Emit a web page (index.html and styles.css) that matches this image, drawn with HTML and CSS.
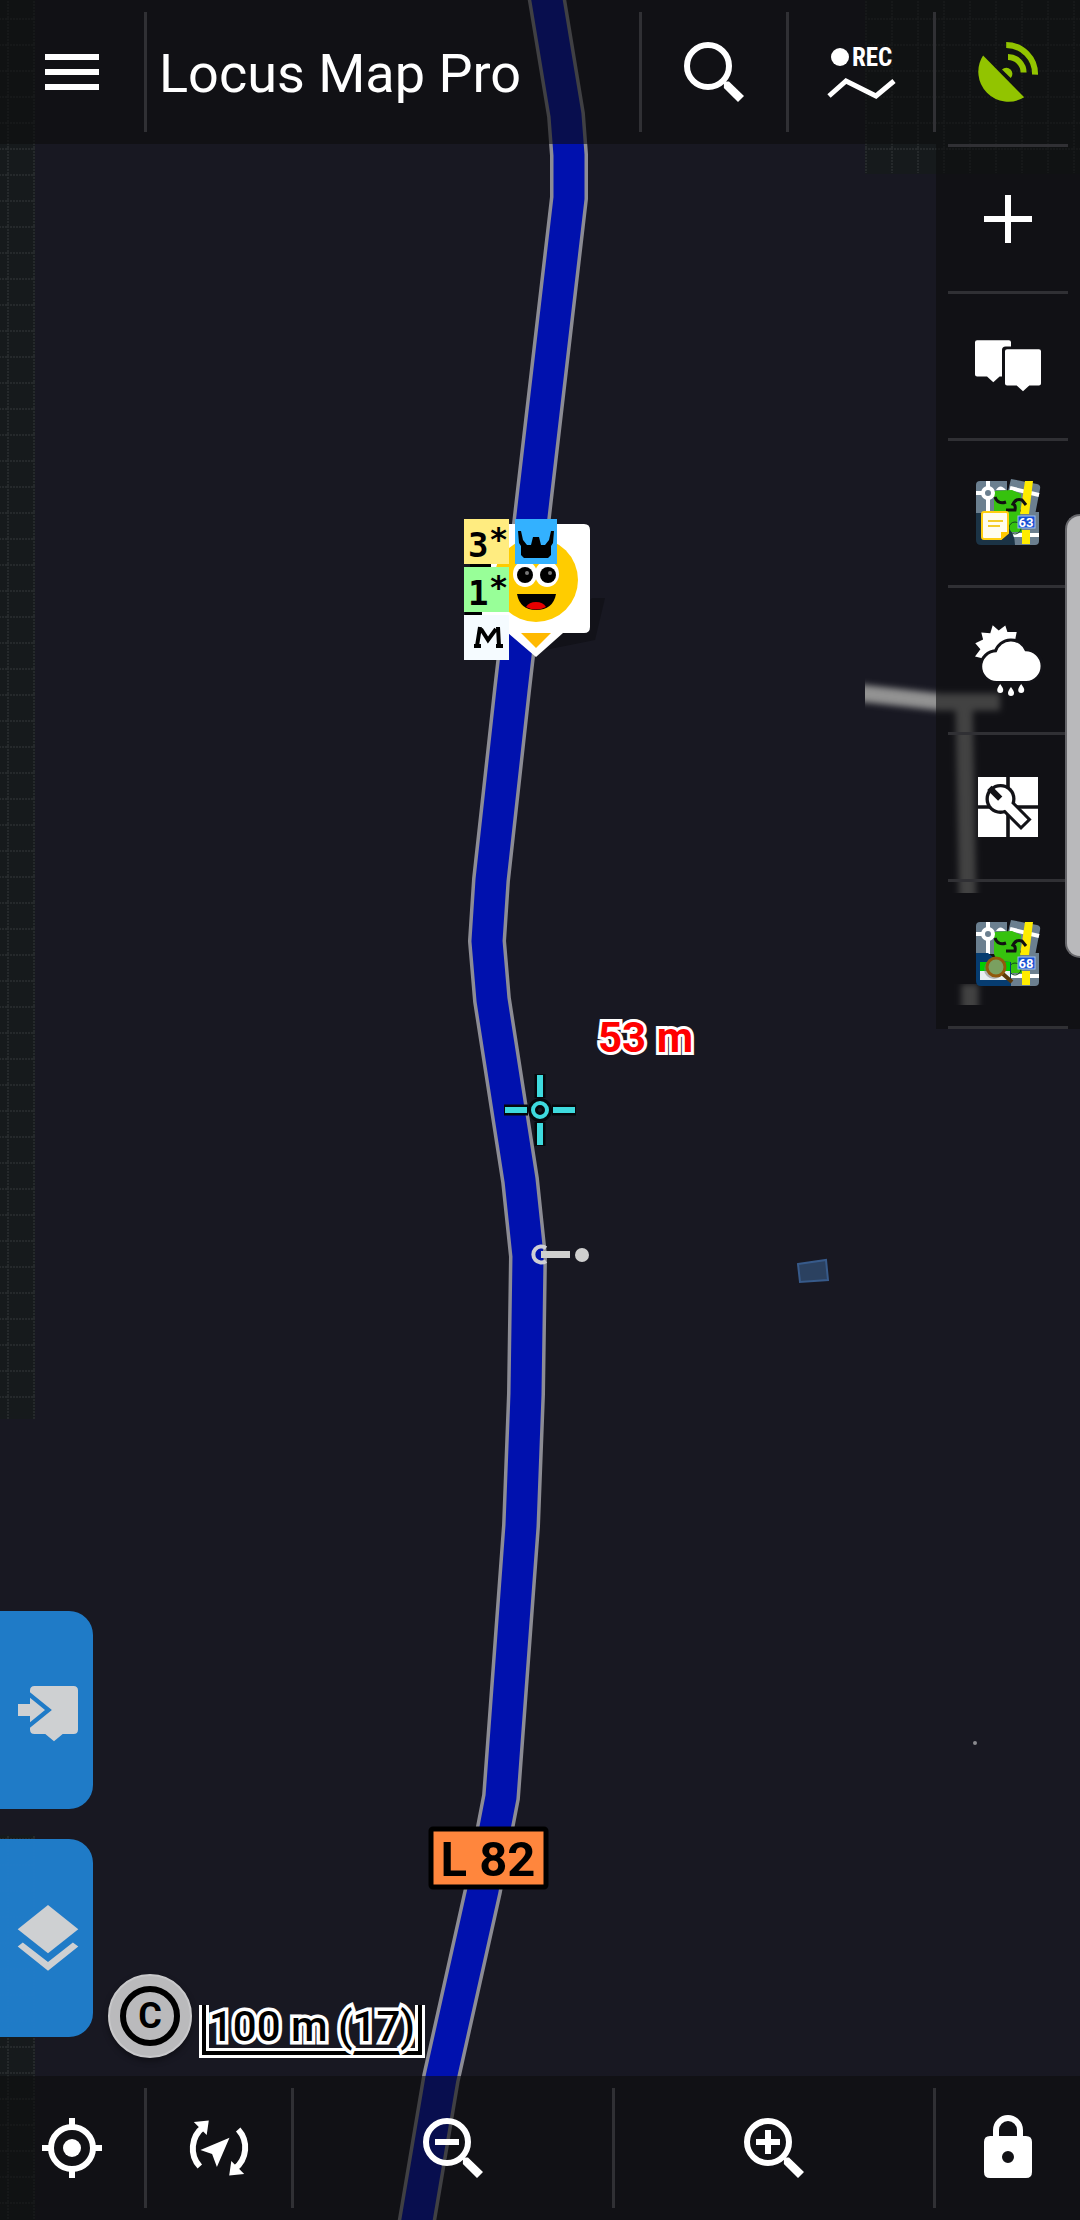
FILE: index.html
```html
<!DOCTYPE html>
<html lang="en">

<head>
    <meta charset="UTF-8">
    <meta name="viewport" content="width=device-width, initial-scale=1.0">
    <title>Locus Map Pro</title>
    <link rel="stylesheet" href="styles.css">
</head>

<body>
    <div class="app">
        <!-- map canvas -->
        <svg class="map" viewBox="0 0 1080 2220" preserveAspectRatio="xMidYMid slice">
            <defs>
                <pattern id="grid" x="7" y="18" width="26" height="26" patternUnits="userSpaceOnUse">
                    <path d="M0 1H26M1 0V26" class="grid-line" />
                </pattern>
                <filter id="soft" x="-20%" y="-50%" width="140%" height="200%">
                    <feGaussianBlur stdDeviation="3" />
                </filter>
                <clipPath id="tileClip">
                    <path d="M865 660H1080V893H865ZM950 984H1000V1005H950Z" />
                </clipPath>
            </defs>

            <rect width="1080" height="2220" fill="#181822" />
            <path class="forest" d="M0 0H35V1419H0ZM865 0H1080V174H865ZM0 1835H35V2220H0Z" />
            <path fill="url(#grid)" d="M0 0H35V1419H0ZM865 0H1080V173H865ZM0 1835H35V2220H0Z" />

            <!-- side roads -->
            <g clip-path="url(#tileClip)">
                <g class="side-road" filter="url(#soft)">
                    <path d="M850 692L940 702L1000 702" />
                    <path d="M964 702L968 920" />
                    <path d="M970 984V1020" />
                </g>
            </g>

            <!-- main road -->
            <path class="road-edge" d="M545 -12L547 0L566 115L569 155L569 198L555 318L535 490L512 690L491 880L487 941L492 1000L520 1180L528 1256L526 1394L521 1526L501 1797L483 1890L441 2078L415 2232" />
            <path class="road" d="M545 -12L547 0L566 115L569 155L569 198L555 318L535 490L512 690L491 880L487 941L492 1000L520 1180L528 1256L526 1394L521 1526L501 1797L483 1890L441 2078L415 2232" />

            <!-- building, barrier, tree -->
            <path d="M798 1264L826 1260L828 1280L800 1282Z" fill="#2b4160" stroke="#375a8a" stroke-width="2" />
            <path d="M546 1248A8 8 0 1 0 546 1261" fill="none" stroke="#cfcfd4" stroke-width="4" />
            <rect x="541" y="1251" width="29" height="7" fill="#cfcfcf" />
            <circle cx="582" cy="1255" r="7" fill="#cfcfcf" />
            <circle cx="975" cy="1743" r="2" fill="#8a8a8e" />

            <!-- geocache marker -->
            <path d="M592 598H605L595 640L545 650Z" fill="#0f0f15" opacity=".7" />
            <path d="M487 524H584Q590 524 590 530V627Q590 633 584 633H563L536 657L508 633H487Q481 633 481 627V530Q481 524 487 524Z" fill="#fff" />
            <circle cx="536" cy="580" r="42" fill="#fc0" />
            <ellipse cx="525" cy="574" rx="12" ry="13" fill="#fff" />
            <ellipse cx="547" cy="574" rx="12" ry="13" fill="#fff" />
            <circle cx="525" cy="575" r="8" />
            <circle cx="548" cy="575" r="8" />
            <circle cx="527" cy="573" r="2" fill="#777" />
            <circle cx="550" cy="573" r="2" fill="#777" />
            <path d="M517 594H556Q553 610 536 610Q520 610 517 594Z" />
            <path d="M526 607Q529 602 536 602Q543 602 546 607Q536 612 526 607Z" fill="#e60000" />
            <path d="M521 633H551L536 648Z" fill="#ffb900" />
            <path d="M470 564H491V567H470ZM465 612H482V615H465Z" />
            <rect x="464" y="519" width="45" height="45" fill="#ffec80" />
            <rect x="464" y="567" width="45" height="45" fill="#98ff98" />
            <rect x="464" y="615" width="45" height="45" fill="#f5fbff" />
            <rect x="515" y="519" width="42" height="45" fill="#33b1ff" />
            <path d="M518 531H521L523 540L527 545H531L533 537H539L541 545H545L549 540L551 531H554L553 543L551 546V555L548 558H524L521 555V546L519 543Z" />
            <g class="badge-text">
                <text x="468" y="557">3</text>
                <text x="489" y="550" class="star">*</text>
                <text x="468" y="605">1</text>
                <text x="489" y="598" class="star">*</text>
            </g>
            <path d="M480 627L477 646M474 646H481M481 629L488 640L496 629M498 627L499 646M496 646H503" fill="none" stroke="#000" stroke-width="4" />

            <!-- distance and map centre -->
            <text x="598" y="1052" class="distance">53 m</text>
            <g fill="none">
                <path d="M504 1110H528M552 1110H576M540 1074V1098M540 1122V1146" stroke="#05080c" stroke-width="11" />
                <circle cx="540" cy="1110" r="7" stroke="#05080c" stroke-width="10" />
                <path d="M505 1110H527M553 1110H575M540 1075V1097M540 1123V1145" stroke="#3edade" stroke-width="6" />
                <circle cx="540" cy="1110" r="7" stroke="#3edade" stroke-width="4" />
            </g>

            <!-- road number -->
            <rect x="431" y="1829" width="115" height="58" rx="2" fill="#ff863d" stroke="#000" stroke-width="5" />
            <text x="488" y="1876" class="road-number">L 82</text>
        </svg>

        <header class="top-bar">
            <button class="tool" aria-label="Menu">
                <svg class="icon" viewBox="0 0 24 24"><path d="M3 6H21V8H3ZM3 11H21V13H3ZM3 16H21V18H3Z" /></svg>
            </button>
            <h1 class="title">Locus Map Pro</h1>
            <button class="tool" aria-label="Search">
                <svg class="icon" viewBox="0 0 24 24">
                    <circle cx="10" cy="10" r="7" class="line" />
                    <path d="M15.3 15.2H17L22 20L20 22L15.3 17.3Z" />
                </svg>
            </button>
            <button class="tool" aria-label="Track recording">
                <svg class="icon" viewBox="0 0 72 72">
                    <circle cx="15" cy="21" r="9" />
                    <text x="27" y="30" class="rec">REC</text>
                    <path d="M4 60L21 45L51 60L69 45" class="line line-px" />
                </svg>
            </button>
            <button class="tool gps" aria-label="GPS">
                <svg class="icon" viewBox="0 0 24 24">
                    <path d="M3.7 6.5A10 10 0 0 0 17.4 20.4Z" />
                    <path d="M10 11.2A1.9 1.9 0 0 1 12.9 14Z" />
                    <path d="M11.4 3A9.6 9.6 0 0 1 21 12.9M12 7A5.2 5.2 0 0 1 17.2 12.2" class="line" />
                </svg>
            </button>
        </header>

        <main class="overlay">
            <nav class="quick">
                <button class="quick-btn" aria-label="Points panel">
                    <svg class="icon" viewBox="0 0 24 24">
                        <path d="M7.5 4H20.5Q22 4 22 5.5V18.5Q22 20 20.5 20H16.9L14 22.4L11.1 20H7.5Q6 20 6 18.5V17.9L13.3 12L6 6.1V5.5Q6 4 7.5 4Z" />
                        <path d="M2 10H6V7.9L11 12L6 16.1V14H2Z" />
                    </svg>
                </button>
                <button class="quick-btn" aria-label="Map layers">
                    <svg class="icon" viewBox="0 0 24 24">
                        <path d="M12 1L22.1 9.1L12 17.1L1.9 9.1Z" />
                        <path d="M1.9 14.8L3.6 13.5L12 20L20.3 13.5L22.1 14.8L12 22.9Z" />
                    </svg>
                </button>
            </nav>

            <div class="map-info">
                <button class="copyright" aria-label="Map copyright"><span class="copyright-mark">C</span></button>
                <div class="scale"><div class="scale-label">100 m (17)</div></div>
            </div>

            <nav class="side-bar">
                <button class="side-btn" aria-label="Add">
                    <svg class="icon" viewBox="0 0 24 24"><path d="M11 4H13V11H20V13H13V20H11V13H4V11H11Z" /></svg>
                </button>
                <button class="side-btn" aria-label="Points">
                    <svg class="icon" viewBox="0 0 24 24">
                        <path d="M1.7 3.4H12.3Q13 3.4 13 4.1V5.5H11.2Q10 5.5 10 6.7V15.5H9.2L7.1 17.4L5 15.5H1.7Q1 15.5 1 14.8V4.1Q1 3.4 1.7 3.4Z" />
                        <path d="M11.7 6.4H22.3Q23 6.4 23 7.1V17.8Q23 18.5 22.3 18.5H19.1L17 20.4L14.9 18.5H11.7Q11 18.5 11 17.8V7.1Q11 6.4 11.7 6.4Z" />
                    </svg>
                </button>
                <button class="side-btn" aria-label="Map note">
                    <svg class="icon" viewBox="0 0 72 72">
                        <g id="puzzle">
                            <path d="M8 4H35V36H4V8Q4 4 8 4Z" fill="#6b7f8f" />
                            <path d="M38 35H67V64Q67 68 63 68H38Z" fill="#6b7f8f" />
                            <path d="M16 4V36M4 16H22M38 58H67" stroke="#fff" stroke-width="4" fill="none" />
                            <path d="M39 2L65 7Q69 8 68 12L63 38L50 35L36 14Z" fill="#6b7f8f" />
                            <path d="M38 11L67 18" stroke="#fff" stroke-width="4" fill="none" />
                            <path d="M53 4H61L57 37H48ZM50 53H58V67H50Z" fill="#ffec00" />
                            <path d="M22 14L40 13L49 17L48 35L50 55H30L22 36Z" fill="#36c20e" />
                            <circle cx="16" cy="16" r="5" fill="#6b7f8f" stroke="#fff" stroke-width="4" />
                            <path d="M24 13Q28 6 34 13Z" fill="#fff" />
                            <path d="M23 20Q26 28 34 25M34 33H43Q44 28 41 27Q44 21 50 23L54 28" stroke="#111" stroke-width="3" fill="none" />
                            <circle cx="43" cy="51" r="6" fill="none" stroke="#142" stroke-width="1" />
                            <rect x="46" y="39" width="17" height="12" fill="#1750d4" stroke="#9cc0f5" stroke-width="1" />
                        </g>
                        <path d="M4 36H34V50Q43 55 43 68H9Q4 68 4 63Z" fill="#1b3345" />
                        <path d="M12 35H34Q36 35 36 37V56L29 62H12Q10 62 10 60V37Q10 35 12 35Z" fill="#fffdf0" stroke="#ffcf10" stroke-width="2" />
                        <path d="M29 63V55H37Z" fill="#ffc800" />
                        <path d="M16 44H31M16 49H28" stroke="#f4cd2a" stroke-width="2" />
                        <text x="54" y="50" class="badge-number">63</text>
                    </svg>
                </button>
                <button class="side-btn" aria-label="Weather">
                    <svg class="icon" viewBox="0 0 24 24">
                        <path d="M6.9 .4L8.9 2.2L11.1 .5L11.8 2.7L14.9 2.7L14.4 5.2L8 11.5L3.4 11.4L1 10.8L2.8 8.4L1.1 6.4L3.7 5.2L3.1 2.8L6.1 3.1Z" />
                        <path class="cloud-gap" d="M8.2 19A4.8 4.8 0 0 1 8.2 9.4A5 5 0 0 1 17.7 9.1A4.9 4.9 0 0 1 18.1 19Z" />
                        <path d="M8.2 19A4.8 4.8 0 0 1 8.2 9.4A5 5 0 0 1 17.7 9.1A4.9 4.9 0 0 1 18.1 19Z" />
                        <path d="M9.4 20Q10.5 21.5 10.4 22A1 1 0 0 1 8.4 22Q8.4 21.3 9.4 20ZM13 21Q14.1 22.5 14 23A1 1 0 0 1 12 23Q12 22.3 13 21ZM16.4 20Q17.5 21.5 17.4 22A1 1 0 0 1 15.4 22Q15.4 21.3 16.4 20Z" />
                    </svg>
                </button>
                <button class="side-btn" aria-label="Map tools">
                    <svg class="icon" viewBox="0 0 24 24">
                        <path d="M2 2H11.4V11.4H2ZM12.6 2H22V11.4H12.6ZM2 12.6H11.4V22H2ZM12.6 12.6H22V22H12.6Z" />
                        <path d="M9.5 9.3L18.1 17.9" class="wrench-edge" />
                        <circle cx="9.5" cy="9.3" r="5" fill="#121217" />
                        <circle cx="9.5" cy="9.3" r="3.9" />
                        <path d="M9.5 9.3L17.4 17.2" class="wrench" />
                        <path d="M5.8 5.6L9.4 9.2" class="wrench-slot" />
                    </svg>
                </button>
                <button class="side-btn" aria-label="Map search">
                    <svg class="icon" viewBox="0 0 72 72">
                        <use href="#puzzle" />
                        <path d="M4 35H16Q24 44 39 44V68H9Q4 68 4 63Z" fill="#063c70" />
                        <path d="M8 44H38V53H8Z" fill="#0c0" />
                        <path d="M8 53H38V62H8Z" fill="#e8eef0" />
                        <circle cx="22" cy="51" r="10" fill="#777" opacity=".5" />
                        <path d="M31 56L40 64" stroke="#5c3a0a" stroke-width="4" />
                        <circle cx="24" cy="49" r="9" fill="#7aa060" stroke="#91590c" stroke-width="3" />
                        <text x="54" y="50" class="badge-number">68</text>
                    </svg>
                </button>
            </nav>
        </main>

        <footer class="bottom-bar">
            <button class="tool" aria-label="Centre on GPS">
                <svg class="icon" viewBox="0 0 24 24">
                    <circle cx="12" cy="12" r="7" class="line" />
                    <circle cx="12" cy="12" r="3" />
                    <path d="M11 2H13V5H11ZM11 19H13V22H11ZM2 11H5V13H2ZM19 11H22V13H19Z" />
                </svg>
            </button>
            <button class="tool" aria-label="Rotate map">
                <svg class="icon" viewBox="0 0 24 24">
                    <path d="M5.6 18.2A9 9 0 0 1 6.8 5M18.4 5.8A9 9 0 0 1 17.2 19" class="line" />
                    <path d="M8.6 2.8L3.6 3.3L7.9 7.7ZM15.4 21.2L20.4 20.7L16.1 16.3Z" />
                    <path d="M15.5 8.6L5.8 12.7L9.7 14L11.3 18.3Z" />
                </svg>
            </button>
            <button class="tool wide" aria-label="Zoom out">
                <svg class="icon" viewBox="0 0 24 24">
                    <circle cx="10" cy="10" r="7" class="line" />
                    <path d="M15.3 15.2H17L22 20L20 22L15.3 17.3ZM6 9H14V11H6Z" />
                </svg>
            </button>
            <button class="tool wide" aria-label="Zoom in">
                <svg class="icon" viewBox="0 0 24 24">
                    <circle cx="10" cy="10" r="7" class="line" />
                    <path d="M15.3 15.2H17L22 20L20 22L15.3 17.3ZM9 6H11V9H14V11H11V14H9V11H6V9H9Z" />
                </svg>
            </button>
            <button class="tool" aria-label="Lock screen">
                <svg class="icon" viewBox="0 0 24 24">
                    <path fill-rule="evenodd" d="M6 8H18Q20 8 20 10V20Q20 22 18 22H6Q4 22 4 20V10Q4 8 6 8ZM12 13A2 2 0 0 0 12 17A2 2 0 0 0 12 13Z" />
                    <path d="M8 9V6A4 4 0 0 1 16 6V9" class="line" />
                </svg>
            </button>
        </footer>

        <div class="edge-handle"></div>
    </div>
</body>

</html>
```
FILE: styles.css
```css
* {
    box-sizing: border-box;
    margin: 0;
    padding: 0;
}

body {
    background-color: #181822;
    color: #fff;
    font-family: Roboto, "Liberation Sans", sans-serif;
}

button {
    border: none;
    background: none;
    color: inherit;
    font: inherit;
    cursor: pointer;
}

.app {
    position: relative;
    display: flex;
    flex-direction: column;
    min-height: 100vh;
    overflow: hidden;
}

/* map */
.map {
    position: absolute;
    top: 0;
    left: 0;
    width: 100%;
    height: 100%;
}

.forest {
    fill: #161a1c;
}

.grid-line {
    fill: none;
    stroke: #25292b;
    stroke-width: 2;
    stroke-dasharray: 2 1;
}

.side-road {
    fill: none;
    stroke: #929292;
    stroke-width: 17;
}

.road-edge {
    fill: none;
    stroke: #8c8c94;
    stroke-width: 38;
}

.road {
    fill: none;
    stroke: #0011ae;
    stroke-width: 31;
}

.badge-text {
    font: bold 34px "Liberation Sans Narrow", "DejaVu Sans Mono", monospace;
}

.badge-text .star {
    font-size: 32px;
}

.distance {
    fill: #f00;
    stroke: #fff;
    stroke-width: 6px;
    paint-order: stroke;
    font-size: 42px;
    font-weight: bold;
}

.road-number {
    font-size: 49px;
    font-weight: bold;
    text-anchor: middle;
}

/* bars */
.top-bar,
.bottom-bar {
    position: relative;
    display: flex;
    height: 144px;
    background-color: rgba(14, 14, 14, .6);
}

.tool,
.side-btn {
    display: flex;
    align-items: center;
    justify-content: center;
}

.tool {
    flex: 0 0 147px;
    background: linear-gradient(#303034, #303034) left center / 3px 120px no-repeat;
    padding-left: 3px;
}

.tool:first-child {
    flex-basis: 144px;
    background: none;
    padding-left: 0;
}

.wide {
    flex: 1;
}

.title {
    flex: 1;
    padding-left: 15px;
    background: linear-gradient(#303034, #303034) left center / 3px 120px no-repeat;
    font-size: 54px;
    font-weight: normal;
    line-height: 148px;
    height: 144px;
    white-space: nowrap;
}

.gps {
    color: #92c400;
}

.icon {
    display: block;
    width: 72px;
    height: 72px;
    fill: currentColor;
}

.line {
    fill: none;
    stroke: currentColor;
    stroke-width: 2;
}

.line-px {
    stroke-width: 5;
}

.rec {
    font: bold 25px "Roboto Condensed", "Liberation Sans Narrow", Roboto, sans-serif;
}

.badge-number {
    fill: #fff;
    font-size: 13px;
    font-weight: bold;
    text-anchor: middle;
}

.cloud-gap {
    stroke: #121217;
    stroke-width: 2;
}

.wrench-edge {
    stroke: #121217;
    stroke-width: 5;
}

.wrench {
    stroke: #fff;
    stroke-width: 3;
}

.wrench-slot {
    stroke: #121217;
    stroke-width: 2;
}

/* content over the map */
.overlay {
    position: relative;
    display: flex;
    flex: 1;
    align-items: flex-end;
}

.quick {
    display: flex;
    flex-direction: column;
    gap: 30px;
    padding-bottom: 39px;
}

.quick-btn {
    width: 93px;
    height: 198px;
    padding-left: 12px;
    border-radius: 0 24px 24px 0;
    background-color: #207dcb;
    color: #d2d4d6;
    opacity: .98;
}

.map-info {
    display: flex;
    align-items: flex-end;
    gap: 7px;
    padding: 0 0 18px 15px;
}

.copyright {
    width: 84px;
    height: 84px;
    padding: 10px;
    border: 2px solid #c8c8ca;
    border-radius: 50%;
    background-color: #bababc;
    color: #000;
    box-shadow: 0 3px 6px rgba(0, 0, 0, .4);
}

.copyright-mark {
    display: block;
    border: 6px solid #000;
    border-radius: 50%;
    font-size: 36px;
    font-weight: bold;
    line-height: 48px;
}

.scale {
    padding: 0 4px 4px;
    border: 3px solid #fff;
    border-top: none;
    background-color: #000;
}

.scale-label {
    border: 3px solid #fff;
    border-top: none;
    background-color: #181822;
    color: #000;
    font-size: 42px;
    font-weight: 500;
    line-height: 43px;
    -webkit-text-stroke: 7px #fff;
    paint-order: stroke fill;
    white-space: nowrap;
}

.side-bar {
    align-self: flex-start;
    margin-left: auto;
    background: linear-gradient(#303034, #303034) center bottom / 120px 3px no-repeat rgba(14, 14, 14, .6);
    padding-bottom: 3px;
}

.side-btn {
    width: 144px;
    height: 147px;
    padding-top: 3px;
    background: linear-gradient(#303034, #303034) center top / 120px 3px no-repeat;
}

.edge-handle {
    position: absolute;
    top: 514px;
    right: 0;
    width: 15px;
    height: 444px;
    border: 2px solid #66666a;
    border-right: none;
    border-radius: 15px 0 0 15px;
    background-color: #b9b9bb;
}
```
